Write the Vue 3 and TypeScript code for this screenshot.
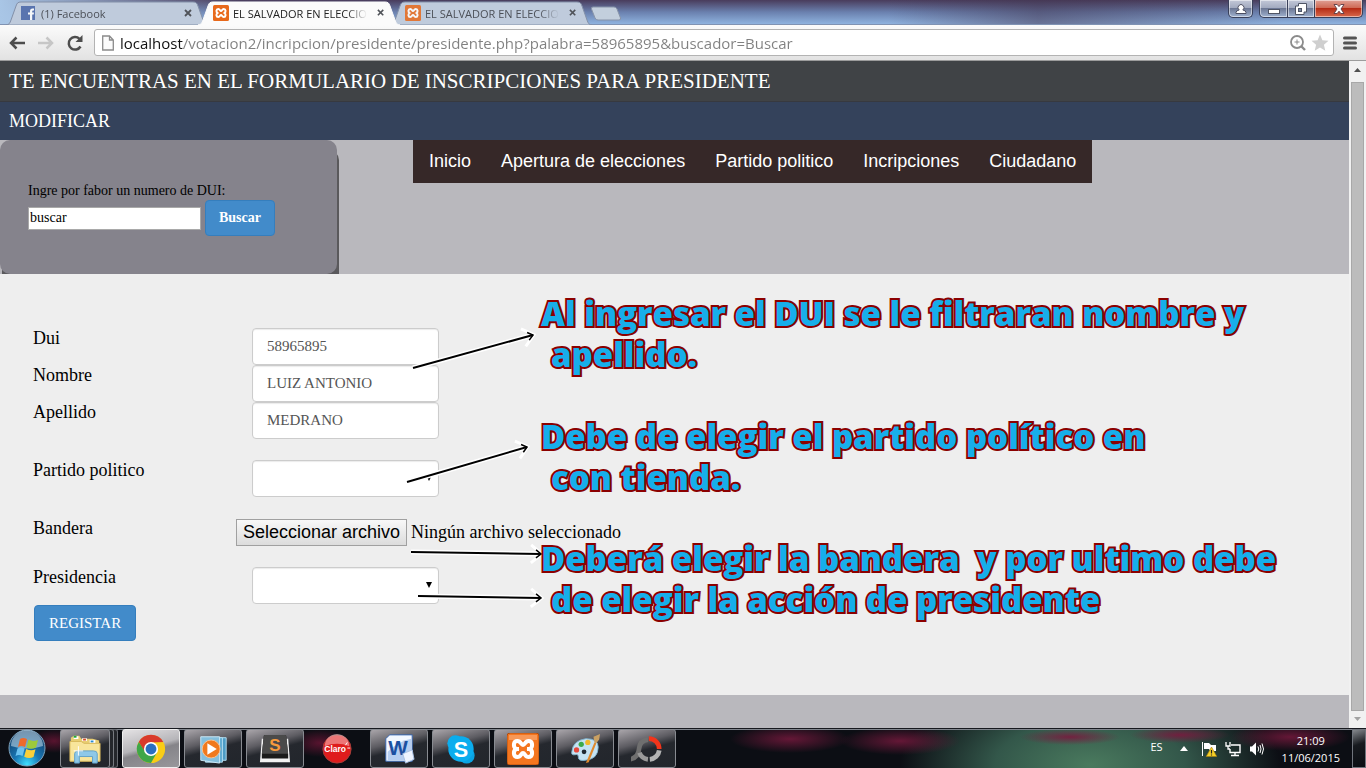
<script setup lang="ts">
import { ref } from 'vue'

interface Tab {
  title: string
  icon: 'facebook' | 'xampp'
  active: boolean
}

interface Note {
  id: string
  lines: string[]
}

interface Arrow {
  from: [number, number]
  to: [number, number]
}

const tabs: Tab[] = [
  { title: '(1) Facebook', icon: 'facebook', active: false },
  { title: 'EL SALVADOR EN ELECCIO', icon: 'xampp', active: true },
  { title: 'EL SALVADOR EN ELECCIO', icon: 'xampp', active: false },
]

const menu: string[] = ['Inicio', 'Apertura de elecciones', 'Partido politico', 'Incripciones', 'Ciudadano']

const notes: Note[] = [
  { id: 'dui', lines: ['Al ingresar el DUI se le filtraran nombre y', 'apellido.'] },
  { id: 'party', lines: ['Debe de elegir el partido político en', 'con tienda.'] },
  { id: 'flag', lines: ['Deberá elegir la bandera  y por ultimo debe', 'de elegir la acción de presidente'] },
]

const arrows: Arrow[] = [
  { from: [413, 307], to: [533, 274] },
  { from: [407, 421], to: [527, 386] },
  { from: [411, 491], to: [541, 493] },
  { from: [418, 535], to: [541, 537] },
]

const headTransform = ({ from, to }: Arrow): string => {
  const angle = (Math.atan2(to[1] - from[1], to[0] - from[0]) * 180) / Math.PI
  return `translate(${to[0]} ${to[1]}) rotate(${angle})`
}

const apps: string[] = ['explorer', 'chrome', 'media', 'sublime', 'claro', 'word', 'skype', 'xampp', 'paint', 'recorder']

const url = ref('localhost/votacion2/incripcion/presidente/presidente.php?palabra=58965895&buscador=Buscar')
const search = ref('buscar')
const dui = ref('58965895')
const nombre = ref('LUIZ ANTONIO')
const apellido = ref('MEDRANO')
const partido = ref('')
const presidencia = ref('')
const fileInput = ref<HTMLInputElement | null>(null)

const pickFile = () => fileInput.value?.click()
</script>

<template>
  <div class="screen">
    <header class="tabstrip">
      <div v-for="(tab, i) in tabs" :key="i" class="tab" :class="{ active: tab.active }">
        <svg class="tab-shape" viewBox="0 0 202 24" preserveAspectRatio="none" aria-hidden="true">
          <path d="M0 24 C3 24 4 22 5 19 L10 5 C11 2 12 1 15 1 H187 C190 1 191 2 192 5 L197 19 C198 22 199 24 202 24Z" />
        </svg>
        <svg v-if="tab.icon === 'facebook'" class="favicon" viewBox="0 0 16 16" aria-hidden="true">
          <rect x="0" y="1" width="14" height="14" fill="#4866a8" />
          <path d="M9 15 V9.500 H7 V7.500 H9 V6 Q9 3.500 11.500 3.500 H13 V5.600 H12 Q11.200 5.600 11.200 6.400 V7.500 H13 L12.700 9.500 H11.200 V15Z" fill="#fff" />
        </svg>
        <svg v-else class="favicon" viewBox="0 0 32 32" aria-hidden="true">
          <rect width="32" height="32" rx="3" fill="#e8691b" />
          <path class="xampp-line" d="M9 16 C6 14 6 8 10.5 8 C14 8 14 12 16 12 C18 12 18 8 21.5 8 C26 8 26 14 23 16 C26 18 26 24 21.5 24 C18 24 18 20 16 20 C14 20 14 24 10.5 24 C6 24 6 18 9 16Z" />
        </svg>
        <button type="button" class="tab-title">{{ tab.title }}</button>
        <button type="button" class="tab-close" aria-label="Cerrar pestaña">
          <svg viewBox="0 0 8 8" aria-hidden="true"><path d="M1 1 L7 7 M7 1 L1 7" stroke="#505359" stroke-width="1.8" /></svg>
        </button>
      </div>
      <button type="button" class="new-tab" aria-label="Nueva pestaña">
        <svg viewBox="0 0 32 15" aria-hidden="true"><path d="M3 1 H24 Q26 1 27 3 L30.500 12 Q31 14 29 14 H8 Q6 14 5 12 L1.500 3 Q1 1 3 1Z" fill="#c3cfdd" stroke="#8793a8" /></svg>
      </button>
      <div class="window-buttons">
        <button type="button" class="wbtn user" aria-label="Usuario">
          <svg viewBox="0 0 12 12" aria-hidden="true"><path d="M1 10.500 V9.500 Q1 7.500 4.200 7 A3 3 0 1 1 7.800 7 Q11 7.500 11 9.500 V10.500Z" fill="#fff" stroke="#4b4e62" /></svg>
        </button>
        <button type="button" class="wbtn min" aria-label="Minimizar">
          <svg viewBox="0 0 12 12" aria-hidden="true"><rect x="0.500" y="6.500" width="11" height="4" fill="#fff" stroke="#4f5565" /></svg>
        </button>
        <button type="button" class="wbtn max" aria-label="Restaurar">
          <svg viewBox="0 0 12 12" aria-hidden="true"><path d="M3.500 0.500 H11.500 V9 H9 V11.500 H0.500 V3 H3.500Z" fill="#fff" stroke="#4f5565" /><rect x="3.500" y="5.500" width="3" height="3" fill="#7b8aa5" stroke="#4f5565" /></svg>
        </button>
        <button type="button" class="wbtn close" aria-label="Cerrar">
          <svg viewBox="0 0 12 12" aria-hidden="true"><path d="M1 1.500 H4.200 L6 3.600 L7.800 1.500 H11 L8 6 L11 10.500 H7.800 L6 8.200 L4.200 10.500 H1 L4 6Z" fill="#fff" stroke="#5b3a43" stroke-width=".9" /></svg>
        </button>
      </div>
    </header>

    <div class="toolbar">
      <button type="button" class="tool" aria-label="Atrás">
        <svg viewBox="0 0 18 18" aria-hidden="true"><path d="M17 9 H3 M8.500 3.500 L3 9 L8.500 14.500" fill="none" stroke="#4d4d4d" stroke-width="2.500" /></svg>
      </button>
      <button type="button" class="tool" aria-label="Adelante">
        <svg viewBox="0 0 18 18" aria-hidden="true"><path d="M1 9 H15 M9.500 3.500 L15 9 L9.500 14.500" fill="none" stroke="#c6c6c6" stroke-width="2.500" /></svg>
      </button>
      <button type="button" class="tool" aria-label="Recargar">
        <svg viewBox="0 0 18 18" aria-hidden="true"><path d="M14.500 12.500 A6.300 6.300 0 1 1 13.500 4.800" fill="none" stroke="#4d4d4d" stroke-width="2.500" /><path d="M16.500 1 V8 H9.500Z" fill="#4d4d4d" /></svg>
      </button>
      <div class="omnibox">
        <svg class="page-icon" viewBox="0 0 12 16" aria-hidden="true"><path d="M.7 1 H7.500 L11.300 5 V15 H.7Z M7.500 1 V5 H11.300" fill="#fbfbfb" stroke="#8b8b8b" stroke-width="1.300" /></svg>
        <input v-model="url" type="text" class="url" aria-label="Dirección" spellcheck="false">
        <svg class="omni-icon" viewBox="0 0 18 18" aria-hidden="true"><circle cx="8" cy="8" r="6" fill="none" stroke="#8b8b8b" stroke-width="1.800" /><path d="M12.500 12.500 L16 16" stroke="#8b8b8b" stroke-width="2.400" /><path d="M8 5.500 V10.500 M5.500 8 H10.500" stroke="#8b8b8b" /></svg>
        <svg class="omni-icon" viewBox="0 0 18 18" aria-hidden="true"><path d="M9 .5 L11.400 6.200 L17.500 6.700 L12.900 10.700 L14.300 16.800 L9 13.500 L3.700 16.800 L5.100 10.700 L.5 6.700 L6.600 6.200Z" fill="#cfcfcf" /></svg>
      </div>
      <button type="button" class="menu-btn" aria-label="Menú">
        <svg viewBox="0 0 14 14" aria-hidden="true"><path d="M1.500 2 H12.500 M1.500 7 H12.500 M1.500 12 H12.500" stroke="#545454" stroke-width="3" stroke-linecap="round" /></svg>
      </button>
    </div>

    <div class="viewport">
      <main class="page">
        <h1 class="title">TE ENCUENTRAS EN EL FORMULARIO DE INSCRIPCIONES PARA PRESIDENTE</h1>
        <h2 class="subtitle">MODIFICAR</h2>
        <section class="top">
          <form class="search" @submit.prevent>
            <label for="search">Ingre por fabor un numero de DUI:</label>
            <div class="search-row">
              <input id="search" v-model="search" type="text">
              <button type="submit" class="btn bold">Buscar</button>
            </div>
          </form>
          <nav class="menu">
            <a v-for="item in menu" :key="item" href="#">{{ item }}</a>
          </nav>
        </section>

        <form class="form" @submit.prevent>
          <div class="row">
            <label for="dui">Dui</label>
            <input id="dui" v-model="dui" type="text" class="control">
          </div>
          <div class="row">
            <label for="nombre">Nombre</label>
            <input id="nombre" v-model="nombre" type="text" class="control">
          </div>
          <div class="row spaced">
            <label for="apellido">Apellido</label>
            <input id="apellido" v-model="apellido" type="text" class="control">
          </div>
          <div class="row spaced">
            <label for="partido">Partido politico</label>
            <div class="select-wrap">
              <select id="partido" v-model="partido" class="control"><option value="" /></select>
              <svg class="caret" viewBox="0 0 6 6" aria-hidden="true"><path d="M0 0 H6 L3 6Z" /></svg>
            </div>
          </div>
          <div class="row spaced">
            <label for="bandera">Bandera</label>
            <div class="file">
              <input id="bandera" ref="fileInput" type="file" class="file-native" tabindex="-1">
              <button type="button" class="file-btn" @click="pickFile">Seleccionar archivo</button>
              <span>Ningún archivo seleccionado</span>
            </div>
          </div>
          <div class="row">
            <label for="presidencia">Presidencia</label>
            <div class="select-wrap">
              <select id="presidencia" v-model="presidencia" class="control"><option value="" /></select>
              <svg class="caret" viewBox="0 0 6 6" aria-hidden="true"><path d="M0 0 H6 L3 6Z" /></svg>
            </div>
          </div>
          <button type="submit" class="btn register">REGISTAR</button>
        </form>

        <svg class="arrows" width="560" height="560" viewBox="0 0 560 560" aria-hidden="true">
          <g v-for="(arrow, i) in arrows" :key="i" fill="none">
            <path :d="`M${arrow.from} L${arrow.to}`" stroke="#fff" stroke-width="5" />
            <path d="M-10 -9 L1 0 L-10 9" :transform="headTransform(arrow)" stroke="#fff" stroke-width="3" />
            <path :d="`M${arrow.from} L${arrow.to}`" stroke="#000" stroke-width="2" />
            <path d="M-5 -4 L0 0 L-5 4" :transform="headTransform(arrow)" stroke="#000" stroke-width="1.500" />
          </g>
        </svg>
        <p v-for="note in notes" :key="note.id" class="note" :class="note.id">
          <span v-for="line in note.lines" :key="line">{{ line }}</span>
        </p>
      </main>
      <div class="scrollbar" aria-hidden="true">
        <svg class="sb-arrow" viewBox="0 0 17 21"><path d="M5 11 L8.500 7 L12 11Z" fill="#505050" /></svg>
        <div class="thumb" />
        <svg class="sb-arrow low" viewBox="0 0 17 17"><path d="M5 6 L8.500 10 L12 6Z" fill="#a3a3a3" /></svg>
      </div>
    </div>

    <footer class="taskbar">
      <button type="button" class="start" aria-label="Inicio">
        <svg viewBox="0 0 38 38" aria-hidden="true">
          <defs>
            <radialGradient id="orb" cx=".5" cy=".95" r=".9"><stop offset="0" stop-color="#3fe0ff" /><stop offset=".4" stop-color="#1977b5" /><stop offset="1" stop-color="#123a63" /></radialGradient>
          </defs>
          <circle cx="19" cy="19" r="18" fill="url(#orb)" stroke="#7fa3bd" />
          <path d="M3 17 A16 16 0 0 1 35 17 Q19 22 3 17Z" fill="#c9e2f0" opacity=".55" />
          <path d="M12 10 Q15 8 19 10 L17 18 Q13 16 10 18Z" fill="#ed6a2c" />
          <path d="M20.500 10.500 Q25 13 30 11 L28 18.500 Q23 21 18.500 18.500Z" fill="#9cc93c" />
          <path d="M9.500 19.500 Q13 17.500 16.700 19.500 L14.500 27 Q11 25 7.500 27Z" fill="#6bc2f0" />
          <path d="M18.200 20 Q23 22.500 27.500 20.300 L25.500 28 Q21 30 16.200 27.700Z" fill="#fbd03a" />
        </svg>
      </button>
      <div class="apps">
        <button v-for="app in apps" :key="app" type="button" class="app" :class="app" :aria-label="app">
          <svg v-if="app === 'explorer'" viewBox="0 0 34 34" aria-hidden="true">
            <path d="M2 30 V5 L5 3 H11 L13 6 H25 L32 8 V30Z" fill="#e9cf73" />
            <path d="M5 5 H10 M14 7 H19 M22 9 H28" stroke="#fff" stroke-width="3" /><path d="M5 4 H8" stroke="#1dab3c" stroke-width="2" /><path d="M15 7 H18" stroke="#d44b2a" stroke-width="2" /><path d="M23 9 H26" stroke="#2a8bd0" stroke-width="2" />
            <path d="M1 9 H13 L16 11 H33 V30 H1Z" fill="#f8e59b" stroke="#d6b85b" />
            <path d="M6 32 V22 Q6 19 10 19 H26 Q30 19 30 22 V32 H25 V25 H11 V32Z" fill="#8ec8e8" stroke="#5fa0c8" />
            <path d="M10 14 V24 M5 19 H15" stroke="#fff" />
          </svg>
          <svg v-else-if="app === 'chrome'" viewBox="0 0 34 34" aria-hidden="true">
            <circle cx="17" cy="17" r="15" fill="#f9cd16" />
            <path d="M4 9.500 A15 15 0 0 1 30 9.500 L17 10 L10.500 20.500Z" fill="#d93a2c" />
            <path d="M4 9.500 A15 15 0 0 0 17 32 L23.500 20.500 L17 24 L11 20.500Z" fill="#3fa648" />
            <circle cx="17" cy="17" r="7.500" fill="#fff" /><circle cx="17" cy="17" r="5.800" fill="#2a6fc0" />
          </svg>
          <svg v-else-if="app === 'media'" viewBox="0 0 34 34" aria-hidden="true">
            <path d="M12 5 H31 V29 H12Z" fill="#4d9cc5" stroke="#b9e0f2" /><path d="M9 5 H27 V31 H9Z" fill="#5ba9d0" stroke="#b9e0f2" /><path d="M4 4 H24 V32 L4 29Z" fill="#84bfdd" stroke="#cfeaf6" />
            <circle cx="15" cy="17" r="9.500" fill="#f0791d" stroke="#fbc28f" /><path d="M11 11 L21 17 L11 23Z" fill="#fff" />
          </svg>
          <svg v-else-if="app === 'sublime'" viewBox="0 0 34 34" aria-hidden="true">
            <path d="M3 6 H31 L33 31 H1Z" fill="#f2f2f2" /><path d="M6 2 H28 Q29 2 29 4 L31 23 V27 H3 V23 L5 4 Q5 2 6 2Z" fill="#1b1b1b" /><path d="M6 2 H28 Q29 2 29 4 L31 22 H3 L5 4 Q5 2 6 2Z" fill="#4a4a4a" />
            <text x="17" y="19" text-anchor="middle" font-size="18" font-weight="700" fill="#f89a3c">S</text>
          </svg>
          <svg v-else-if="app === 'claro'" viewBox="0 0 34 34" aria-hidden="true">
            <circle cx="17" cy="17" r="15" fill="#df1c1c" stroke="#a3403c" /><path d="M4 14 A13 13 0 0 1 30 14 Q17 9 4 14Z" fill="#fff" opacity=".4" />
            <text x="15" y="20" text-anchor="middle" font-size="9" font-weight="700" fill="#fff">Claro</text><path d="M26 13 L28 10 M28 16 H31" stroke="#fff" />
          </svg>
          <svg v-else-if="app === 'word'" viewBox="0 0 34 34" aria-hidden="true">
            <path d="M3 6 L7 2 H31 V30 H3Z" fill="#f2f7ff" stroke="#3667b5" /><path d="M5 20 Q17 8 30 6 V29 H5Z" fill="#b5cdf0" />
            <text x="16" y="23" text-anchor="middle" font-size="22" font-weight="900" fill="#1b4fa0">W</text><path d="M21 22 L31 18 L33 28 L24 32Z" fill="#eef4ff" stroke="#a9c0e2" />
          </svg>
          <svg v-else-if="app === 'skype'" viewBox="0 0 34 34" aria-hidden="true">
            <circle cx="11" cy="11" r="8.500" fill="#0badee" /><circle cx="23" cy="24" r="8.500" fill="#0aa3e2" /><circle cx="17" cy="17" r="13.500" fill="#0badee" />
            <text x="17" y="25" text-anchor="middle" font-size="23" font-weight="900" fill="#fff">S</text>
          </svg>
          <svg v-else-if="app === 'xampp'" viewBox="0 0 32 32" aria-hidden="true">
            <rect width="32" height="32" rx="3" fill="#f4761f" stroke="#b04c0d" /><path d="M2 2 H30 V7 H2Z" fill="#fff" opacity=".25" />
            <path class="xampp-line" d="M9 16 C6 14 6 8 10.5 8 C14 8 14 12 16 12 C18 12 18 8 21.5 8 C26 8 26 14 23 16 C26 18 26 24 21.5 24 C18 24 18 20 16 20 C14 20 14 24 10.5 24 C6 24 6 18 9 16Z M9 16 H12 M20 16 H23" />
          </svg>
          <svg v-else-if="app === 'paint'" viewBox="0 0 34 34" aria-hidden="true">
            <path d="M3 20 Q4 8 18 6 Q31 6 31 15 Q31 28 17 29 Q10 30 10 26 Q10 22 7 23 Q2 24 3 20Z" fill="#c5e3f3" stroke="#7fb2cd" />
            <circle cx="8" cy="18" r="2.800" fill="#e5483c" /><circle cx="13" cy="12" r="2.800" fill="#3caa4a" /><circle cx="20" cy="10" r="2.800" fill="#f2b82b" /><circle cx="16" cy="20" r="2.500" fill="#1f2933" />
            <path d="M18 32 L27 10 L29 11 L21 31Z" fill="#e08a2d" /><path d="M27 10 L26 4 L33 1 L32 7 L29 11Z" fill="#c9a063" />
          </svg>
          <svg v-else viewBox="0 0 34 34" aria-hidden="true">
            <path d="M18 7 Q9 8 8.500 17 Q8 26 -1 28" fill="none" stroke="#6f6f6f" stroke-width="5" />
            <path d="M19 6 A11 11 0 0 1 30 17" fill="none" stroke="#f2351b" stroke-width="5" />
            <path d="M30 18.500 A11 11 0 0 1 20 28" fill="none" stroke="#b4b4b4" stroke-width="5" /><path d="M18 28 A11 11 0 0 1 9 21" fill="none" stroke="#9a9a9a" stroke-width="5" />
          </svg>
        </button>
      </div>
      <div class="tray">
        <span class="lang">ES</span>
        <svg class="tray-caret" viewBox="0 0 8 5" aria-hidden="true"><path d="M0 5 L4 0 L8 5Z" fill="#fff" /></svg>
        <svg class="tray-icon" viewBox="0 0 16 16" aria-hidden="true"><path d="M1.500 1 V15" stroke="#fff" /><path d="M3 2 H8 L10 4 H15 V10 H9 L8 8 H3Z" fill="#fff" /><path d="M10.500 6 L15.800 15.500 H5.200Z" fill="#f6cf27" stroke="#a67f0a" stroke-width=".6" /><path d="M10.500 9 V12.500 M10.500 13.500 V14.500" stroke="#222" stroke-width="1.200" /></svg>
        <svg class="tray-icon" viewBox="0 0 16 16" aria-hidden="true"><path d="M6 4 H15 V11.500 H5 V8" fill="none" stroke="#fff" stroke-width="1.400" /><path d="M10 11.500 V14 M6 14.500 H14" stroke="#fff" stroke-width="1.400" /><path d="M1 1 V5 H5 V1 M3 5 V8 H5" fill="none" stroke="#fff" stroke-width="1.300" /></svg>
        <svg class="tray-icon" viewBox="0 0 16 16" aria-hidden="true"><path d="M1 5.500 H3 L7 1.500 V14.500 L3 10.500 H1Z" fill="#fff" /><path d="M9 5.500 Q10.500 8 9 10.500 M11 4 Q13 8 11 12 M13 2.500 Q16 8 13 13.500" fill="none" stroke="#fff" /></svg>
        <div class="clock"><span>21:09</span><span>11/06/2015</span></div>
        <button type="button" class="desktop" aria-label="Mostrar escritorio" />
      </div>
    </footer>
  </div>
</template>

<style>
html,
body {
  height: 100%;
  margin: 0;
  overflow: hidden;
}
#app {
  height: 100%;
}
</style>

<style scoped>
* {
  box-sizing: border-box;
}
svg {
  display: block;
}
button {
  padding: 0;
  border: 0;
  background: none;
  font: inherit;
  color: inherit;
}
.screen {
  display: flex;
  flex-direction: column;
  height: 100%;
  font-family: "Liberation Serif", "Times New Roman", serif;
  color: #000;
}
.xampp-line {
  fill: none;
  stroke: #fff;
  stroke-width: 4;
}

.tabstrip {
  display: flex;
  flex: none;
  height: 25px;
  padding-left: 6px;
  border-bottom: 1px solid #8093b3;
  background:
    linear-gradient(90deg, #a9c6e6 0, rgba(169, 198, 230, 0) 240px),
    linear-gradient(90deg, rgba(66, 52, 78, 0) 65%, rgba(66, 52, 78, .5) 76%, rgba(66, 52, 78, 0) 94%),
    linear-gradient(#493c5c, #6a80ae 50%, #8fb3df);
  font-family: "Open Sans", "Noto Sans", sans-serif;
  font-size: 11px;
}
.tab {
  position: relative;
  display: flex;
  align-items: center;
  width: 202px;
  height: 25px;
  margin-right: -10px;
  padding: 1px 16px 0 15px;
  color: #4c5058;
}
.tab.active {
  z-index: 1;
  color: #222;
}
.tab-shape {
  position: absolute;
  inset: 1px 0 0;
  width: 100%;
  height: 24px;
  fill: #bfcbdc;
  stroke: #8390a8;
}
.active .tab-shape {
  fill: #fbfbfb;
  stroke: #fbfbfb;
}
.favicon {
  position: relative;
  flex: none;
  width: 16px;
  height: 16px;
}
.tab:not(.active) .favicon {
  opacity: .85;
}
.tab-title {
  position: relative;
  flex: 1;
  margin-left: 4px;
  text-align: left;
  white-space: nowrap;
  mask-image: linear-gradient(90deg, #000 85%, transparent);
}
.tab-close {
  position: relative;
  width: 8px;
  height: 8px;
  margin-left: 10px;
}
.new-tab {
  width: 32px;
  height: 15px;
  margin: 6px 0 0 8px;
}
.window-buttons {
  display: flex;
  height: 18px;
  margin: 0 3px 0 auto;
}
.wbtn {
  display: flex;
  align-items: center;
  justify-content: center;
  height: 18px;
  border: 1px solid #39405a;
  border-top: 0;
  background: linear-gradient(#c3c8d8, #a3abc0 45%, #6d7895 50%, #9fb1cf);
  box-shadow: inset 0 0 0 1px rgba(255, 255, 255, .5);
}
.wbtn svg {
  width: 12px;
  height: 12px;
}
.user {
  width: 25px;
  margin-right: 6px;
  border-radius: 0 0 5px 5px;
}
.min {
  width: 29px;
  border-radius: 0 0 0 5px;
}
.max {
  width: 27px;
  border-left: 0;
}
.close {
  width: 48px;
  border-left: 0;
  border-radius: 0 0 5px 0;
  background: linear-gradient(#e0a195, #cf6b56 45%, #b62c15 50%, #d8694b);
}

.toolbar {
  display: flex;
  flex: none;
  align-items: center;
  height: 36px;
  padding: 0 9px 0 8px;
  border-bottom: 1px solid #9c9c9c;
  background: linear-gradient(#fbfbfb, #e2e2e2);
}
.tool {
  width: 18px;
  height: 18px;
  margin-right: 11px;
}
.tool:nth-of-type(3) {
  margin-right: 10px;
}
.omnibox {
  display: flex;
  flex: 1;
  align-items: center;
  height: 27px;
  min-width: 0;
  margin-right: 9px;
  padding: 0 4px 0 7px;
  border: 1px solid #b3b3b3;
  border-radius: 3px;
  background: #fff;
}
.page-icon {
  width: 12px;
  height: 16px;
}
.url {
  flex: 1;
  min-width: 0;
  height: 24px;
  padding: 0 0 0 6px;
  border: 0;
  outline: 0;
  background: linear-gradient(90deg, #111 69px, #808080 69px);
  background-clip: text;
  -webkit-text-fill-color: transparent;
  font-family: "Open Sans", "Noto Sans", sans-serif;
  font-size: 15px;
}
.omni-icon {
  flex: none;
  width: 18px;
  height: 18px;
  margin-left: 4px;
}
.menu-btn {
  width: 14px;
  height: 14px;
}

.viewport {
  display: flex;
  flex: 1;
  min-height: 0;
}
.page {
  position: relative;
  flex: 1;
  min-width: 0;
  overflow: hidden;
  background: #b9b8bd;
}
.title,
.subtitle {
  margin: 0;
  padding-left: 9px;
  color: #fff;
  font-weight: 400;
}
.title {
  background: #404346;
  font-size: 21px;
  line-height: 40px;
}
.subtitle {
  border-top: 1px solid #37393f;
  background: #34425b;
  font-size: 18px;
  line-height: 38px;
}
.top {
  display: flex;
  align-items: flex-start;
  overflow: hidden;
}
.search {
  flex: none;
  width: 337px;
  height: 134px;
  padding: 42px 28px 0;
  border-radius: 10px;
  background: #85838c;
  box-shadow: 2px 10px 0 #5a595c;
  font-size: 14px;
  line-height: 18px;
}
.search-row {
  display: flex;
  align-items: center;
  gap: 4px;
}
.search-row input {
  width: 173px;
  height: 23px;
  padding: 0 1px;
  border: 1px solid #a9a9a9;
  background: #fff;
  color: #000;
  font: 14px "Liberation Serif", "Times New Roman", serif;
}
.btn {
  height: 36px;
  padding: 0 14px;
  border: 1px solid #357ebd;
  border-radius: 4px;
  background: #428bca;
  color: #fff;
  font-size: 15px;
}
.btn.bold {
  padding: 0 13px;
  font-size: 14px;
  font-weight: 700;
}
.menu {
  display: flex;
  margin-left: 76px;
  padding: 0 1px;
  background: #362828;
  font-family: "Liberation Sans", Arial, sans-serif;
  font-size: 18px;
}
.menu a {
  padding: 0 15px;
  color: #fff;
  line-height: 43px;
  text-decoration: none;
  white-space: nowrap;
}

.form {
  padding: 54px 33px;
  background: #eee;
  font-size: 18px;
  line-height: 20px;
}
.row {
  display: flex;
  align-items: flex-start;
}
.row.spaced {
  margin-bottom: 21px;
}
.row label {
  flex: none;
  width: 203px;
}
.control {
  display: block;
  width: 187px;
  height: 37px;
  margin-left: 16px;
  padding: 0 14px;
  border: 1px solid #ccc;
  border-radius: 4px;
  background: #fff;
  box-shadow: inset 0 1px 1px rgba(0, 0, 0, .08);
  color: #555;
  font: 15px "Liberation Serif", "Times New Roman", serif;
  appearance: none;
}
.select-wrap {
  position: relative;
}
.caret {
  position: absolute;
  top: 15px;
  right: 7px;
  width: 6px;
  height: 6px;
  pointer-events: none;
}
.file {
  display: flex;
  align-items: center;
  gap: 4px;
  height: 28px;
}
.file-native {
  position: absolute;
  width: 1px;
  height: 1px;
  opacity: 0;
}
.file-btn {
  height: 27px;
  padding: 0 6px;
  border: 1px solid #a0a0a0;
  background: linear-gradient(#f8f8f8, #dcdcdc);
  font-family: "Liberation Sans", Arial, sans-serif;
}
.register {
  margin: 1px 0 0 1px;
}

.arrows {
  position: absolute;
  top: 0;
  left: 0;
  pointer-events: none;
}
.note {
  position: absolute;
  left: 541px;
  margin: 0;
  color: #17aeea;
  font-family: "Open Sans", "Liberation Sans", sans-serif;
  font-size: 33px;
  font-weight: 800;
  line-height: 41px;
  white-space: pre;
  -webkit-text-stroke: 4px #8b0000;
  paint-order: stroke fill;
}
.note span {
  display: block;
}
.note span + span {
  padding-left: 10px;
}
.note.dui {
  top: 232px;
}
.note.party {
  top: 355px;
}
.note.flag {
  top: 477px;
}

.scrollbar {
  display: flex;
  flex: none;
  flex-direction: column;
  width: 17px;
  background: #f1f1f1;
}
.sb-arrow {
  width: 17px;
  height: 21px;
}
.sb-arrow.low {
  height: 17px;
}
.thumb {
  flex: 1;
  margin: 0 2px;
  border: 1px solid #a8a8a8;
  background: #bcbcbc;
}

.taskbar {
  display: flex;
  flex: none;
  height: 40px;
  border-top: 1px solid #17191f;
  box-shadow: inset 0 1px 0 #80858d;
  background:
    radial-gradient(ellipse 24px 12px at 54px 12px, rgba(120, 22, 58, .7), transparent),
    radial-gradient(ellipse 30px 14px at 320px 14px, rgba(120, 22, 58, .7), transparent),
    radial-gradient(ellipse 50px 8px at 1070px 8px, rgba(120, 26, 62, .9), transparent),
    radial-gradient(ellipse 50px 8px at 1180px 6px, rgba(120, 26, 62, .9), transparent),
    radial-gradient(ellipse 60px 14px at 1290px 8px, rgba(110, 24, 58, .9), transparent),
    radial-gradient(ellipse 60px 14px at 790px 10px, rgba(110, 24, 58, .9), transparent),
    radial-gradient(ellipse 60px 14px at 900px 12px, rgba(110, 24, 58, .9), transparent),
    radial-gradient(ellipse 190px 90px at 1090px 36px, #4a7a5e, #33574a 50%, transparent),
    #0c0e14;
  color: #fff;
  font-family: "Open Sans", "Noto Sans", sans-serif;
  font-size: 11px;
}
.start {
  width: 38px;
  height: 38px;
  margin: 0 14px 0 8px;
}
.apps {
  display: flex;
  gap: 4px;
}
.app {
  display: flex;
  align-items: center;
  justify-content: center;
  width: 58px;
  height: 39px;
  border: 1px solid #888b91;
  border-radius: 3px;
  background: linear-gradient(165deg, #a9a5aa 0, #5d5c62 35%, #25282e 52%, #22262c);
  font-family: "Liberation Sans", Arial, sans-serif;
}
.app svg {
  width: 32px;
  height: 32px;
}
.app.explorer {
  width: 50px;
  margin-right: 8px;
  box-shadow: 4px 0 0 -1px #24262b, 4px 0 0 #777a80, 8px 0 0 -1px #24262b, 8px 0 0 #66696f;
}
.app.chrome {
  border-color: #eee;
  background: linear-gradient(165deg, #e4e2e4, #b6b5b9 45%, #858489 55%, #98979b);
}
.app.claro {
  border-color: transparent;
  background: none;
}
.tray {
  display: flex;
  align-items: center;
  margin-left: auto;
}
.lang {
  margin: 0 17px 4px 0;
}
.tray-caret {
  width: 8px;
  height: 5px;
  margin-right: 13px;
}
.tray-icon {
  width: 16px;
  height: 16px;
  margin-right: 8px;
}
.clock {
  display: flex;
  flex-direction: column;
  align-items: center;
  margin: 0 12px 0 9px;
  line-height: 17px;
}
.desktop {
  width: 14px;
  height: 39px;
  border: 1px solid #70757d;
  background: linear-gradient(160deg, #85888d, #171a1f 40%, #0a0d12);
}
</style>
